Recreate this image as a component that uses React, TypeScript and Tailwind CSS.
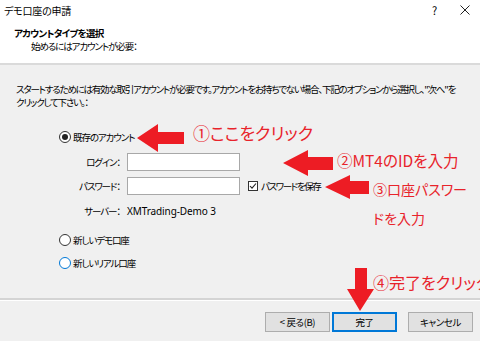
import React from "react";

const ui = "font-['Noto_Sans_CJK_JP',sans-serif] [font-feature-settings:'palt'_1] text-[9.5px] tracking-[-1.1px] text-black";
const note = "absolute font-['Noto_Sans_CJK_JP',sans-serif] text-[#e8232b] whitespace-nowrap leading-none tracking-normal";

function Radio({ checked, focus, label }: { checked?: boolean; focus?: boolean; label: string }) {
  return (
    <div className="flex h-[14px] items-center">
      <span
        className={`flex h-[12px] w-[12px] items-center justify-center rounded-full border bg-white ${
          focus ? "border-[#0078d7]" : "border-[#333333]"
        }`}
      >
        {checked && <span className="h-[6px] w-[6px] rounded-full bg-[#222222]" />}
      </span>
      <span className="ml-[2px]">{label}</span>
    </div>
  );
}

function Field({ label, children }: { label: string; children: React.ReactNode }) {
  return (
    <div className="flex items-center">
      <span className="w-[104px] text-right">{label}</span>
      <div className="ml-[7px] flex items-center">{children}</div>
    </div>
  );
}

function Button({ label, primary }: { label: string; primary?: boolean }) {
  return (
    <button
      className={`flex h-[20px] w-[65px] items-center justify-center whitespace-pre tracking-[-0.4px] bg-[#e1e1e1] border ${
        primary ? "border-[#0078d7] shadow-[inset_0_0_0_1px_#0078d7]" : "border-[#adadad]"
      }`}
    >
      {label}
    </button>
  );
}

export default function App() {
  return (
    <div className={`relative flex h-[341px] w-[480px] flex-col overflow-hidden bg-[#f0f0f0] ${ui}`}>
      {/* header */}
      <div className="h-[65px] border-b-2 border-[#dadada] bg-white">
        <div className="flex h-[20px] items-center justify-between pl-[4px] pr-[10px]">
          <span className="text-[10px] tracking-[-0.2px]">デモ口座の申請</span>
          <div className="flex items-center gap-[24px]">
            <span className="text-[11px]">?</span>
            <svg width="10" height="10" viewBox="0 0 10 10">
              <path d="M0.5 0.5 L9.5 9.5 M9.5 0.5 L0.5 9.5" stroke="#222" strokeWidth="1" />
            </svg>
          </div>
        </div>
        <div className="mt-[7px] pl-[14px] leading-[13px]">
          <div className="font-bold tracking-[-0.7px]">アカウントタイプを選択</div>
          <div className="pl-[17px]">始めるにはアカウントが必要：</div>
        </div>
      </div>

      {/* body */}
      <div className="flex-1 px-[16px] pt-[18px]">
        <p className="whitespace-nowrap leading-[13px] tracking-[-1.2px]">
          スタートするためには有効な取引アカウントが必要です。アカウントをお持ちでない場合、下記のオプションから選択し、"次へ"を
          <br />
          クリックして下さい。：
        </p>
        <div className="ml-[43px] mt-[21px]">
          <Radio checked label="既存のアカウント" />
        </div>
        <div className="mt-[9px] flex flex-col gap-[6px]">
          <Field label="ログイン：">
            <div className="h-[18px] w-[113px] border border-[#a8a8a8] bg-white" />
          </Field>
          <Field label="パスワード：">
            <div className="h-[18px] w-[113px] border border-[#a8a8a8] bg-white" />
            <span className="ml-[8px] flex h-[10px] w-[10px] items-center justify-center border border-[#333] bg-white">
              <svg width="8" height="8" viewBox="0 0 8 8">
                <path d="M1 4 L3 6.2 L7 1.5" fill="none" stroke="#222" strokeWidth="1.1" />
              </svg>
            </span>
            <span className="ml-[3px] tracking-[-1.4px]">パスワードを保存</span>
          </Field>
        </div>
        <div className="mt-[9px] flex items-center">
          <span className="w-[104px] text-right">サーバー：</span>
          <span className="ml-[7px] font-['Noto_Sans',sans-serif] text-[10px] tracking-[-0.1px]">XMTrading-Demo 3</span>
        </div>
        <div className="ml-[43px] mt-[14px] flex flex-col gap-[9px]">
          <Radio label="新しいデモ口座" />
          <Radio focus label="新しいリアル口座" />
        </div>
      </div>

      {/* footer */}
      <div className="h-[43px] border-t-2 border-[#d4d4d4] shadow-[inset_0_1px_0_#ffffff]">
        <div className="mt-[12px] flex justify-end pr-[7px]">
          <Button label="< 戻る(B)" />
          <div className="ml-[2px]">
            <Button primary label="完了" />
          </div>
          <div className="ml-[11px]">
            <Button label="キャンセル" />
          </div>
        </div>
      </div>

      {/* annotations */}
      <svg className="pointer-events-none absolute left-0 top-0" width="480" height="341" viewBox="0 0 480 341">
        <g fill="#ed1c24">
          <polygon points="137,138 158,124 158,132 184,132 184,144 158,144 158,152" />
          <polygon points="283,163 308,150 308,157 333,157 333,170 308,170 308,176" />
          <polygon points="325,187 350,175 350,181 369,181 369,194 350,194 350,199" />
          <polygon points="355,268 367,268 367,289 374,289 360,311 347,289 355,289" />
        </g>
      </svg>
      <span className={`${note} left-[193px] top-[124px] text-[17px]`}>①ここをクリック</span>
      <span className={`${note} left-[337px] top-[153px] text-[15.5px]`}>②MT4のIDを入力</span>
      <span className={`${note} left-[373px] top-[182px] text-[14px] tracking-[-0.3px]`}>③口座パスワー</span>
      <span className={`${note} left-[373px] top-[211px] text-[14px]`}>ドを入力</span>
      <span className={`${note} left-[373px] top-[274px] text-[16px]`}>④完了をクリック</span>
    </div>
  );
}
